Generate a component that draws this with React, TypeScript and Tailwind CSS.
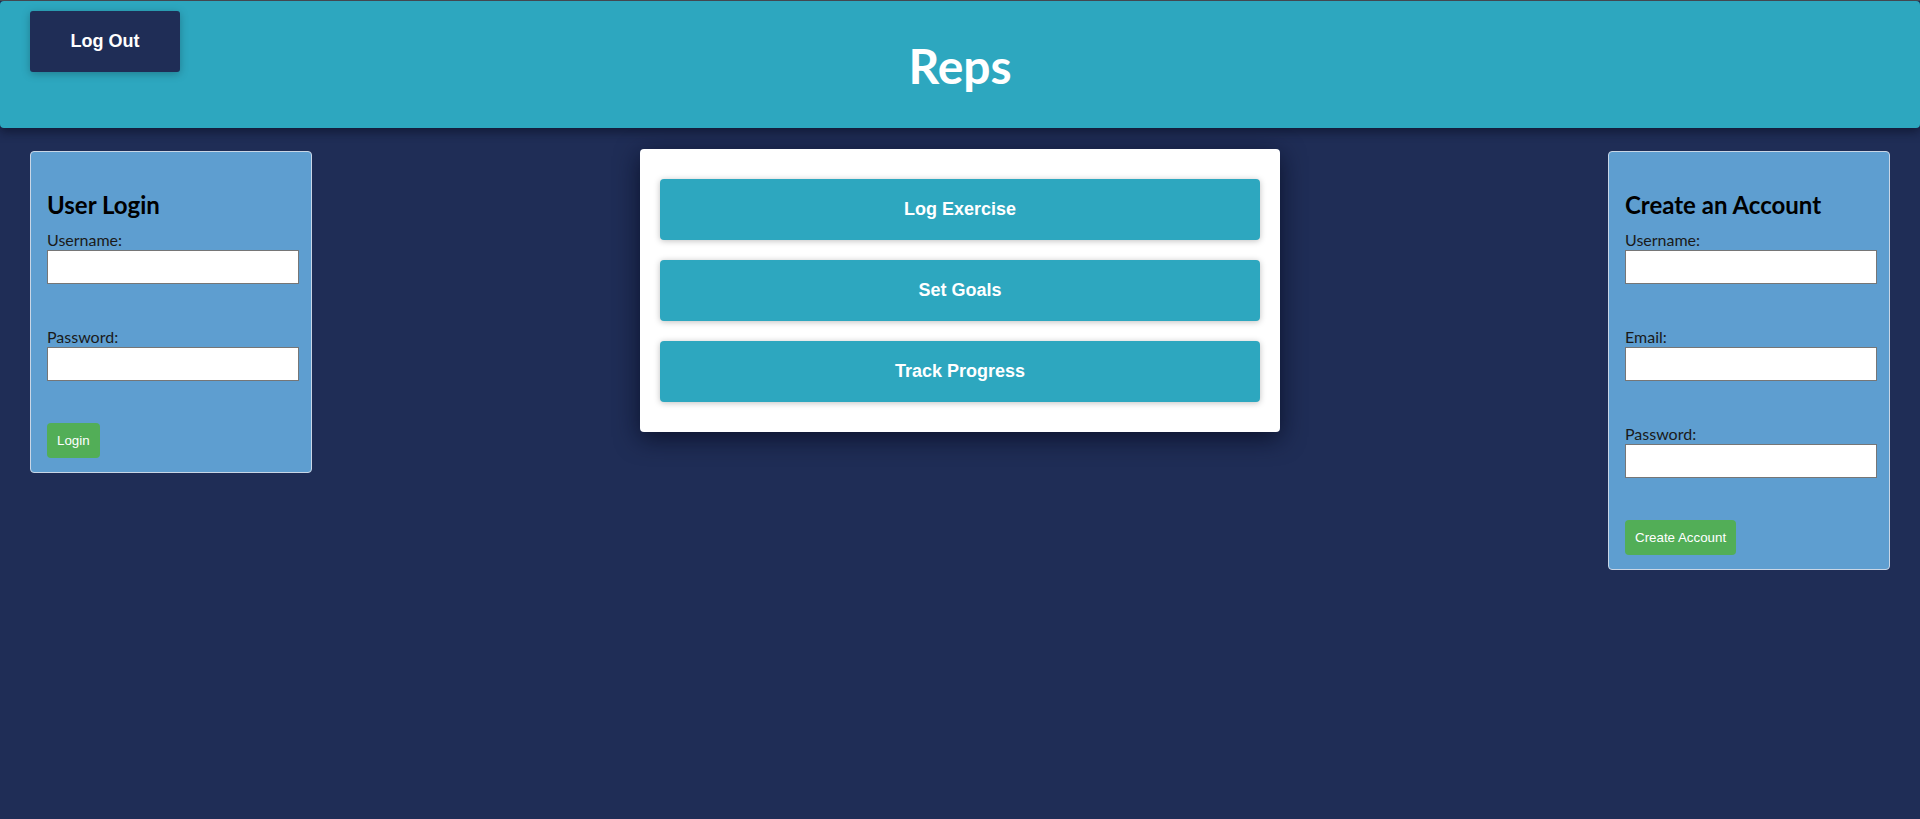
import React, { useState } from 'react';

const sans = 'font-["Lato","Noto_Sans",sans-serif]';

function Field({ label, type = 'text', first = false }: { label: string; type?: string; first?: boolean }) {
  const [value, setValue] = useState('');
  return (
    <div className={first ? '' : 'mt-[43px]'}>
      <label className="block text-[16px] leading-[20px] text-[#1a1a1a]">{label}</label>
      <input
        type={type}
        value={value}
        onChange={(e) => setValue(e.target.value)}
        className="block h-[34px] w-[252px] border border-[#767676] bg-white px-1 text-[14px] outline-none"
      />
    </div>
  );
}

function AuthCard({ title, fields, action }: { title: string; fields: { label: string; type?: string }[]; action: string }) {
  return (
    <div className={`w-[282px] rounded-[4px] border border-[#c9d6e6] bg-[#5e9ed0] px-[16px] pb-[14px] pt-[38px] ${sans}`}>
      <h2 className="mb-[10px] text-[24px] font-bold leading-[30px] text-black">{title}</h2>
      {fields.map((f, i) => (
        <Field key={f.label} label={f.label} type={f.type} first={i === 0} />
      ))}
      <button className="mt-[42px] block h-[35px] rounded-[4px] bg-[#52ae57] px-[10px] font-['Liberation_Sans',Arial,sans-serif] text-[13.33px] text-white">
        {action}
      </button>
    </div>
  );
}

export default function App() {
  const menu = ['Log Exercise', 'Set Goals', 'Track Progress'];

  return (
    <div className="min-h-[819px] bg-[#1f2d56]">
      <div className="h-px bg-[#4a4e56]" />
      <header className="relative flex h-[127px] items-start justify-center rounded-[4px] bg-[#2da7bf] shadow-[0_4px_10px_rgba(10,15,35,0.6)]">
        <button className="absolute left-[30px] top-[10px] h-[61px] w-[150px] rounded-[3px] bg-[#1f2d56] font-['Liberation_Sans',Arial,sans-serif] text-[18px] font-bold text-white shadow-[0_2px_8px_rgba(0,0,0,0.25)]">
          Log Out
        </button>
        <h1 className={`mt-[36px] text-[48px] font-bold leading-[58px] text-white ${sans}`}>Reps</h1>
      </header>

      <main className="flex items-start justify-between px-[30px] pt-[23px]">
        <AuthCard
          title="User Login"
          fields={[{ label: 'Username:' }, { label: 'Password:', type: 'password' }]}
          action="Login"
        />

        <div className="mt-[-2px] flex w-[640px] shrink-0 flex-col gap-[20px] rounded-[4px] bg-white px-[20px] py-[30px] shadow-[0_6px_24px_rgba(5,10,30,0.75)]">
          {menu.map((item) => (
            <button
              key={item}
              className="h-[61px] rounded-[4px] bg-[#2da7bf] font-['Liberation_Sans',Arial,sans-serif] text-[18px] font-bold text-white shadow-[0_1px_6px_rgba(0,0,0,0.25)]"
            >
              {item}
            </button>
          ))}
        </div>

        <AuthCard
          title="Create an Account"
          fields={[{ label: 'Username:' }, { label: 'Email:', type: 'email' }, { label: 'Password:', type: 'password' }]}
          action="Create Account"
        />
      </main>
    </div>
  );
}
